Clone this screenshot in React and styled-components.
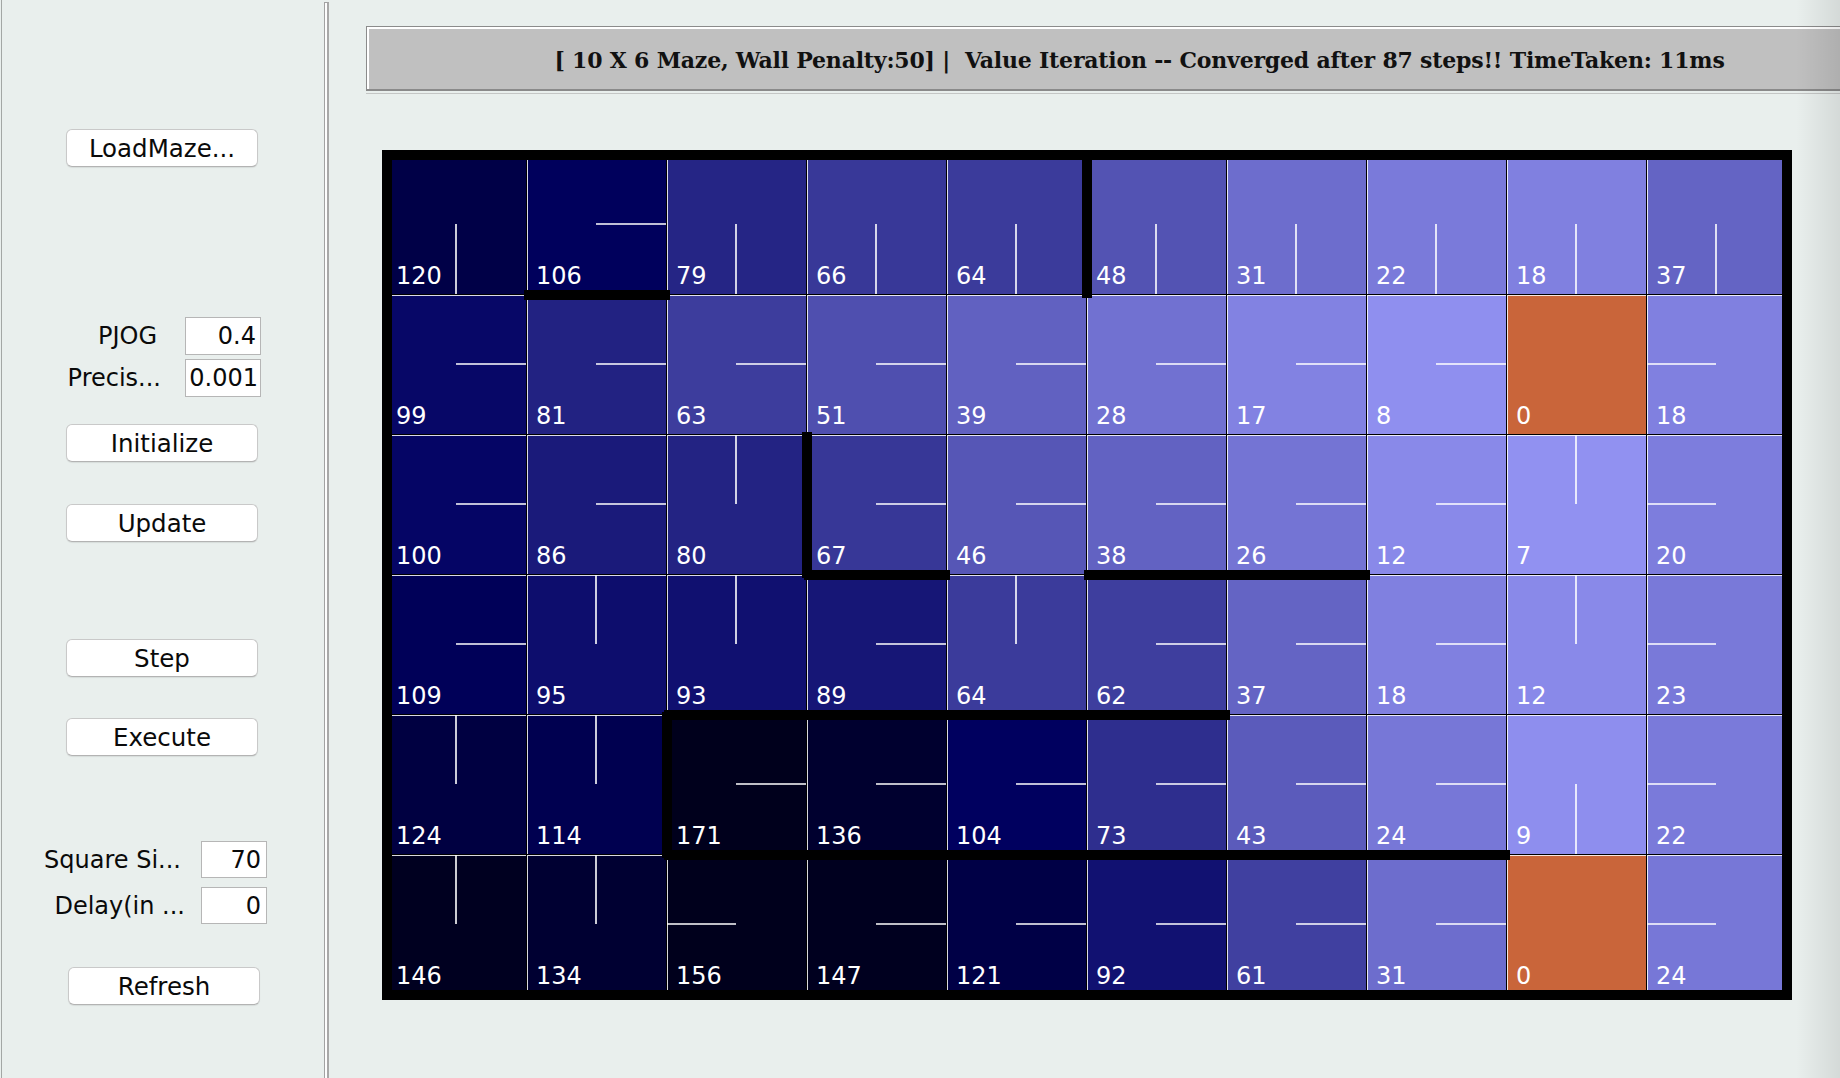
import React from "react";
import styled, { createGlobalStyle } from "styled-components";

const CELL = 140;

const GlobalStyle = createGlobalStyle`
  html, body {
    margin: 0;
    padding: 0;
    overflow: hidden;
    background: #e9efed;
  }
  body {
    font-family: "DejaVu Sans", "Liberation Sans", sans-serif;
  }
`;

const Window = styled.div`
  position: relative;
  display: flex;
  height: 1078px;
  overflow: hidden;
  background: #e9efed;

  // soft shade at the right edge of the window
  &::after {
    content: "";
    position: absolute;
    top: 0;
    right: 0;
    width: 44px;
    height: 100%;
    background: linear-gradient(to right, rgba(0, 0, 0, 0), rgba(0, 0, 0, 0.09));
    pointer-events: none;
  }
`;

const Side = styled.div`
  flex-shrink: 0;
  width: 322px;
  margin-left: 1px;
  border-left: 1px solid #a3a7a5;
  display: flex;
  flex-direction: column;
`;

const Divider = styled.div`
  flex-shrink: 0;
  width: 2px;
  margin-top: 2px;
  background: #fdfdfd;
  border-left: 1px solid #a2a2a2;
  border-right: 2px solid #a8a8a8;
  border-top: 1px solid #a2a2a2;
`;

const Button = styled.div`
  box-sizing: border-box;
  width: 192px;
  height: 38px;
  margin-top: ${(p) => p.$gap}px;
  margin-left: ${(p) => 64 + (p.$shift || 0)}px;
  background: #ffffff;
  border: 1px solid #c9c9c9;
  border-bottom-color: #b3b3b3;
  border-radius: 6px;
  box-shadow: 0 1px 1px rgba(0, 0, 0, 0.08);
  display: flex;
  align-items: center;
  justify-content: center;
  font-size: 24.5px;
  color: #0a0a0a;
  cursor: default;
`;

const FieldRow = styled.div`
  display: flex;
  align-items: center;
  margin-top: ${(p) => p.$gap}px;
  height: ${(p) => p.$h}px;
`;

const Label = styled.div`
  width: ${(p) => p.$w}px;
  text-align: right;
  white-space: pre;
  font-size: 24px;
  color: #0a0a0a;
`;

const Field = styled.input`
  box-sizing: border-box;
  width: ${(p) => p.$w}px;
  height: 100%;
  margin: 0 0 0 ${(p) => p.$gap}px;
  padding: 0 ${(p) => p.$pad}px 0 0;
  border: 1px solid #b6b6b6;
  background: #ffffff;
  font-family: "DejaVu Sans", sans-serif;
  font-size: 24px;
  color: #0a0a0a;
  text-align: right;
  outline: none;
`;

const Main = styled.div`
  flex: 1;
  min-width: 0;
  display: flex;
  flex-direction: column;
  overflow: hidden;
`;

const StatusBar = styled.div`
  flex-shrink: 0;
  box-sizing: border-box;
  width: 1546px;
  height: 65px;
  margin: 26px 0 0 37px;
  padding-top: 3px;
  background: #c0c0c0;
  border-top: 1px solid #8b8b8b;
  border-left: 1px solid #8b8b8b;
  border-bottom: 2px solid #8a8a8a;
  box-shadow: inset 2px 2px 0 #ffffff;
  display: flex;
  align-items: center;
  justify-content: center;
  font-family: "DejaVu Serif", "Liberation Serif", serif;
  font-weight: 700;
  font-size: 22px;
  letter-spacing: -0.2px;
  color: #111;
  white-space: pre;
`;

const StatusRule = styled.div`
  flex-shrink: 0;
  width: 1546px;
  height: 1px;
  margin: 2px 0 0 37px;
  background: #c4c6c5;
`;

const Maze = styled.div`
  position: relative;
  flex-shrink: 0;
  margin: 61px 0 0 58px;
  width: ${CELL * 10}px;
  height: ${CELL * 6}px;
  display: grid;
  grid-template-columns: repeat(10, ${CELL}px);
  grid-template-rows: repeat(6, ${CELL}px);
`;

const Cell = styled.div`
  position: relative;
  box-sizing: border-box;
  background: ${(p) => p.$bg};
  border-right: 1px solid #000;
  border-bottom: 1px solid #000;
  box-shadow: inset 1px 1px 0 rgba(255, 255, 255, 0.85);
  display: flex;
  align-items: flex-end;
  padding: 0 0 6px 9px;
`;

const Value = styled.span`
  position: relative;
  z-index: 1;
  font-size: 24px;
  line-height: 1;
  color: #ffffff;
`;

const Policy = styled.svg`
  position: absolute;
  left: 0;
  top: 0;
  width: 139px;
  height: 139px;
`;

const Wall = styled.div`
  position: absolute;
  left: ${(p) => p.$x}px;
  top: ${(p) => p.$y}px;
  width: ${(p) => p.$w}px;
  height: ${(p) => p.$h}px;
  background: #000;
  z-index: 2;
`;

// value + policy direction, row by row ("0" is a goal square)
const GRID = [
  "120S 106E 79S 66S 64S 48S 31S 22S 18S 37S",
  "99E 81E 63E 51E 39E 28E 17E 8E 0 18W",
  "100E 86E 80N 67E 46E 38E 26E 12E 7N 20W",
  "109E 95N 93N 89E 64N 62E 37E 18E 12N 23W",
  "124N 114N 171E 136E 104E 73E 43E 24E 9S 22W",
  "146N 134N 156W 147E 121E 92E 61E 31E 0 24W",
].map((row) =>
  row.split(" ").map((s) => ({
    value: parseInt(s, 10),
    dir: s.replace(/[0-9]/g, "") || null,
  }))
);

// thick walls in grid units: h = horizontal line at row h from col a to b,
// v = vertical line at col v from row a to b
const WALLS = [
  { h: 0, a: 0, b: 10, outer: true },
  { h: 6, a: 0, b: 10, outer: true },
  { v: 0, a: 0, b: 6, outer: true },
  { v: 10, a: 0, b: 6, outer: true },
  { v: 5, a: 0, b: 1 },
  { h: 1, a: 1, b: 2 },
  { v: 3, a: 2, b: 3 },
  { h: 3, a: 3, b: 4 },
  { h: 3, a: 5, b: 7 },
  { h: 4, a: 2, b: 6 },
  { v: 2, a: 4, b: 5 },
  { h: 5, a: 2, b: 8 },
];

const shade = (v, goal) => {
  if (goal) return "#c9653a";
  const rg = Math.max(0, Math.round(155 - 1.5 * v));
  const b = Math.max(28, Math.round(251 - 1.5 * v));
  return `rgb(${rg},${rg},${b})`;
};

const LINES = {
  N: [69, 0, 69, 69],
  S: [69, 69, 69, 139],
  E: [69, 69, 139, 69],
  W: [0, 69, 69, 69],
};

const Square = ({ value, dir }) => {
  const line = dir && LINES[dir];
  return (
    <Cell $bg={shade(value, !dir)}>
      {line && (
        <Policy viewBox="0 0 139 139">
          <line
            x1={line[0]}
            y1={line[1]}
            x2={line[2]}
            y2={line[3]}
            stroke="#ffffff"
            strokeWidth="1.6"
          />
        </Policy>
      )}
      <Value>{value}</Value>
    </Cell>
  );
};

const wallBox = (w) => {
  const T = 10;
  const ext = w.outer ? 5 : 3;
  if (w.h !== undefined) {
    return {
      $x: w.a * CELL - ext,
      $y: w.h * CELL - T / 2,
      $w: (w.b - w.a) * CELL + ext * 2,
      $h: T,
    };
  }
  return {
    $x: w.v * CELL - T / 2,
    $y: w.a * CELL - ext,
    $w: T,
    $h: (w.b - w.a) * CELL + ext * 2,
  };
};

export default function App() {
  return (
    <>
      <GlobalStyle />
      <Window>
        <Side>
          <Button $gap={129}>LoadMaze...</Button>

          <FieldRow $gap={150} $h={38}>
            <Label $w={155}>PJOG</Label>
            <Field $w={76} $gap={28} $pad={4} readOnly value="0.4" />
          </FieldRow>
          <FieldRow $gap={4} $h={38}>
            <Label $w={159}>Precis...</Label>
            <Field $w={76} $gap={24} $pad={2} readOnly value="0.001" />
          </FieldRow>

          <Button $gap={27}>Initialize</Button>
          <Button $gap={42}>Update</Button>
          <Button $gap={97}>Step</Button>
          <Button $gap={41}>Execute</Button>

          <FieldRow $gap={85} $h={37}>
            <Label $w={179}>Square Si...</Label>
            <Field $w={66} $gap={20} $pad={5} readOnly value="70" />
          </FieldRow>
          <FieldRow $gap={9} $h={37}>
            <Label $w={183}>Delay(in ...</Label>
            <Field $w={66} $gap={16} $pad={5} readOnly value="0" />
          </FieldRow>

          <Button $gap={43} $shift={2}>Refresh</Button>
        </Side>

        <Divider />

        <Main>
          <StatusBar>
            {"[ 10 X 6 Maze, Wall Penalty:50] |  Value Iteration -- Converged after 87 steps!! TimeTaken: 11ms"}
          </StatusBar>
          <StatusRule />

          <Maze>
            {GRID.map((row, r) =>
              row.map((sq, c) => <Square key={`${r}-${c}`} {...sq} />)
            )}
            {WALLS.map((w, i) => (
              <Wall key={i} {...wallBox(w)} />
            ))}
          </Maze>
        </Main>
      </Window>
    </>
  );
}
